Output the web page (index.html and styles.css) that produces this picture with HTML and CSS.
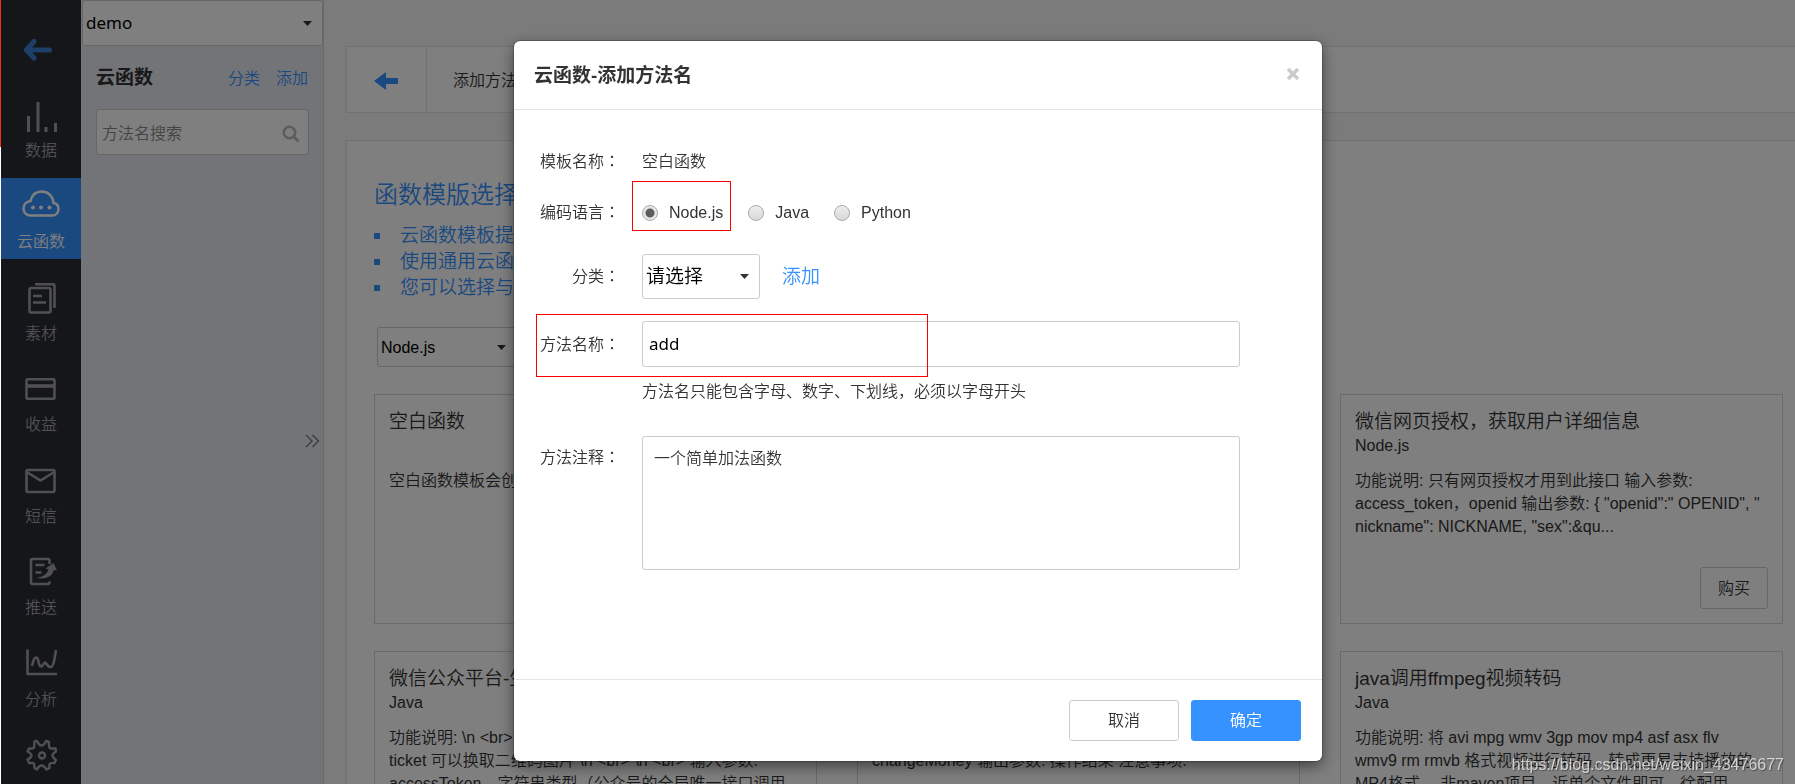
FILE: index.html
```html
<!DOCTYPE html>
<html lang="zh-CN">
<head>
<meta charset="utf-8">
<title>云函数</title>
<link rel="stylesheet" href="styles.css">
</head>
<body>
<div class="app">
  <nav class="nav">
    <a class="nav-back" href="#" aria-label="返回">
      <svg width="30" height="24" viewBox="0 0 30 24" fill="none" stroke="currentColor" stroke-width="5" stroke-linecap="round" stroke-linejoin="round"><path d="M11 3.500L3.500 12L11 20M4 12H26.500"/></svg>
    </a>
    <div class="nav-list">
      <a class="nav-item" href="#">
        <svg width="32" height="32" viewBox="0 0 32 32" fill="none" stroke="currentColor" stroke-width="3"><path d="M3.500 16v16M13 2v30M21 27v5M30.500 23v9"/></svg>
        <span>数据</span>
      </a>
      <a class="nav-item nav-item-active" href="#">
        <svg width="38" height="28" viewBox="0 0 38 28" fill="none" stroke="currentColor" stroke-width="2.500"><path d="M9 25.500C4.500 25.500 1.500 22.500 1.500 18.500C1.500 14.500 4.500 11.500 8.500 11C10 5 14 1.500 19.500 1.500C26 1.500 31 6 31.500 13C34.500 13.500 36.500 16 36.500 19C36.500 22.500 34 25.500 30 25.500Z"/><g fill="currentColor" stroke="none"><circle cx="11" cy="17.500" r="2"/><circle cx="19" cy="17.500" r="2"/><circle cx="27.500" cy="17.500" r="2"/></g></svg>
        <span>云函数</span>
      </a>
      <a class="nav-item" href="#">
        <svg width="32" height="32" viewBox="0 1 32 32" fill="none" stroke="currentColor" stroke-width="2.600"><rect x="4.500" y="6" width="21" height="24.500" rx="1.500"/><path d="M10 2.300H28.500Q29.500 2.300 29.500 3.500V26M8 14h9M8 20.500h13"/></svg>
        <span>素材</span>
      </a>
      <a class="nav-item" href="#">
        <svg width="32" height="32" viewBox="0 1 32 32" fill="none" stroke="currentColor" stroke-width="2.600"><rect x="1.500" y="6.300" width="28" height="19.500" rx="1.500"/><path d="M2 13h28" stroke-width="3.600"/></svg>
        <span>收益</span>
      </a>
      <a class="nav-item" href="#">
        <svg width="32" height="32" viewBox="0 1 32 32" fill="none" stroke="currentColor" stroke-width="2.600"><rect x="1.500" y="5" width="28" height="22" rx="1.500"/><path d="M2.500 7.500L15.500 15.500L28.500 7.500"/></svg>
        <span>短信</span>
      </a>
      <a class="nav-item" href="#">
        <svg width="32" height="32" viewBox="1 2 32 32" fill="none" stroke="currentColor" stroke-width="2.600"><path d="M25.500 9V5.500Q25.500 4 24 4H8.500Q7 4 7 5.500V27.500Q7 29 8.500 29H24Q25.500 29 25.500 26.500M11.500 10h9M11.500 17.500h6"/><path d="M12 23Q22 22 24.500 14.500L21.500 13.500L29.500 8L33 15.500L30 15Q27 25.500 12 23Z" fill="currentColor" stroke="none"/></svg>
        <span>推送</span>
      </a>
      <a class="nav-item" href="#">
        <svg width="32" height="32" viewBox="1 4 32 32" fill="none" stroke="currentColor" stroke-width="2.600"><path d="M3.500 4.500V29H33"/><path d="M8 21C9 17 10 12 12.500 12.500C15 13 14 21 17 21.500C19 21.500 19.500 17.500 21 17.500C22.500 17.500 23 22.500 27 22C30.500 21 31 10 32 5"/></svg>
        <span>分析</span>
      </a>
      <a class="nav-item nav-item-last" href="#" aria-label="设置">
        <svg width="32" height="32" viewBox="0 0 32 32" fill="none" stroke="currentColor" stroke-width="2.400" stroke-linejoin="round"><path d="M9.500 2.500L12 2Q14 6.500 16.500 6.500Q19 6.500 21 2L24 3Q23.500 8.500 25.500 9.500L30.500 9.500L31 12.500Q27.500 14.500 27.500 16.500Q27.500 18.500 31 21L29.500 24Q25.500 23.500 24.500 25V29L21.500 30.500Q19 26.500 16.500 26.500Q14 26.500 12 30.500L9.500 29Q9.500 25 8.500 24L4 24L2.500 20.500Q6.500 18.500 6.500 16.500Q6.500 14.500 2.500 12.500L4 9.500Q8 10 9 8.500Z"/><circle cx="17" cy="16.500" r="3"/></svg>
      </a>
    </div>
  </nav>

  <aside class="side">
    <select class="side-app" aria-label="应用"><option>demo</option></select>
    <div class="side-head">
      <h2>云函数</h2>
      <a href="#">分类</a>
      <a href="#">添加</a>
    </div>
    <div class="search">
      <input type="text" placeholder="方法名搜索" aria-label="方法名搜索">
      <svg width="18" height="18" viewBox="0 0 18 18" fill="none" stroke="currentColor" stroke-width="2.600"><circle cx="7.500" cy="7.500" r="5.700"/><path d="M11.500 11.500L16.500 16.500" stroke-width="3"/></svg>
    </div>
    <button class="side-toggle" type="button" aria-label="展开">
      <svg width="16" height="14" viewBox="0 0 16 14" fill="none" stroke="currentColor" stroke-width="1.300"><path d="M2 1L8 7L2 13M8.500 1L14.500 7L8.500 13"/></svg>
    </button>
  </aside>

  <main class="main">
    <header class="crumb">
      <a class="crumb-back" href="#" aria-label="返回">
        <svg width="24" height="18" viewBox="0 0 24 18" fill="currentColor"><path d="M0 9L12 0V6H24V12H12V18Z"/></svg>
      </a>
      <span class="crumb-title">添加方法</span>
    </header>
    <section class="panel">
      <h1>函数模版选择</h1>
      <ul class="tips">
        <li>云函数模板提供</li>
        <li>使用通用云函数</li>
        <li>您可以选择与</li>
      </ul>
      <select class="lang" aria-label="语言"><option>Node.js</option></select>
      <div class="cards">
        <article class="card">
          <h3>空白函数</h3>
          <p class="card-lang"></p>
          <p>空白函数模板会创建</p>
        </article>
        <article class="card"></article>
        <article class="card">
          <h3>微信网页授权，获取用户详细信息</h3>
          <p class="card-lang">Node.js</p>
          <p>功能说明: 只有网页授权才用到此接口 输入参数:<br>access_token，openid 输出参数: { "openid":" OPENID", "<br>nickname": NICKNAME, "sex":&amp;qu...</p>
          <button class="buy" type="button">购买</button>
        </article>
        <article class="card">
          <h3>微信公众平台-生成二维码</h3>
          <p class="card-lang">Java</p>
          <p>功能说明: \n &lt;br&gt;<br>ticket 可以换取二维码图片 \n &lt;br&gt; \n &lt;br&gt; 输入参数:<br>accessToken，字符串类型（公众号的全局唯一接口调用</p>
        </article>
        <article class="card">
          <h3></h3>
          <p class="card-lang">Java</p>
          <p>功能说明:<br>changeMoney 输出参数: 操作结果 注意事项:</p>
        </article>
        <article class="card">
          <h3>java调用ffmpeg视频转码</h3>
          <p class="card-lang">Java</p>
          <p>功能说明: 将 avi mpg wmv 3gp mov mp4 asf asx flv<br>wmv9 rm rmvb 格式视频进行转码，转成更易支持播放的<br>MP4格式， 非maven项目，近单个文件即可，徐配用</p>
        </article>
      </div>
    </section>
  </main>
</div>

<div class="overlay">
  <form class="modal" role="dialog" aria-labelledby="modal-title">
    <header class="modal-head">
      <h2 id="modal-title">云函数-添加方法名</h2>
      <button class="close" type="button" aria-label="关闭">
        <svg width="14" height="14" viewBox="0 0 14 14" fill="none" stroke="currentColor" stroke-width="3.600"><path d="M2 1L12 11M12 1L2 11"/></svg>
      </button>
    </header>
    <div class="modal-body">
      <div class="row row-text">
        <span class="label">模板名称<span lang="zh-TW" class="mid">：</span></span>
        <span>空白函数</span>
      </div>
      <div class="row row-radio">
        <span class="label">编码语言<span lang="zh-TW" class="mid">：</span></span>
        <div class="radios">
          <label class="marked"><input type="radio" name="lang" checked>Node.js</label>
          <label><input type="radio" name="lang">Java</label>
          <label><input type="radio" name="lang">Python</label>
        </div>
      </div>
      <div class="row row-kind">
        <label class="label" for="kind">分类<span lang="zh-TW" class="mid">：</span></label>
        <select class="kind" id="kind"><option>请选择</option></select>
        <a class="add" href="#">添加</a>
      </div>
      <div class="row row-name">
        <label class="label" for="name">方法名称<span lang="zh-TW" class="mid">：</span></label>
        <input class="name" id="name" type="text" value="add">
        <span class="frame"></span>
      </div>
      <p class="hint">方法名只能包含字母、数字、下划线，必须以字母开头</p>
      <div class="row row-note">
        <label class="label" for="note">方法注释<span lang="zh-TW" class="mid">：</span></label>
        <textarea class="note" id="note">一个简单加法函数</textarea>
      </div>
    </div>
    <footer class="modal-foot">
      <button class="btn" type="button">取消</button>
      <button class="btn btn-primary" type="submit">确定</button>
    </footer>
  </form>
</div>
<span class="edge"></span>
<span class="watermark">https://blog.csdn.net/weixin_43476677</span>
</body>
</html>
```
FILE: styles.css
```css
* { box-sizing: border-box; }

html, body { height: 100%; }

body {
  margin: 0;
  padding-left: 1px;
  overflow: hidden;
  background: #fff;
  color: #333;
  font: 350 16px/23px "Liberation Sans", "Noto Sans CJK SC", sans-serif;
}

h1, h2, h3, p, ul { margin: 0; padding: 0; }
a { color: #3592ff; text-decoration: none; }
button, input, select, textarea { font: inherit; color: inherit; }

select {
  appearance: none;
  border: 1px solid #ccc;
  border-radius: 3px;
  color: #000;
  background: #fff url("data:image/svg+xml,%3Csvg xmlns='http://www.w3.org/2000/svg' width='9' height='5'%3E%3Cpath d='M0 0h9L4.500 5z' fill='%23333'/%3E%3C/svg%3E") no-repeat right 10px center;
}

/* Full-width colon centred in its cell */
.mid { font-family: "Noto Sans CJK TC", sans-serif; line-height: 1; }

.app { display: flex; height: 100%; overflow: hidden; background: #f6f6f6; }

/* Left navigation */
.nav {
  display: flex;
  flex-direction: column;
  flex: 0 0 80px;
  background: #282c34;
}
.nav-back { display: flex; padding: 38px 0 0 22px; height: 87px; color: #3c80d0; }
.nav-list { display: flex; flex: 1; flex-direction: column; justify-content: space-between; }
.nav-item {
  display: flex;
  flex-direction: column;
  align-items: center;
  justify-content: flex-end;
  gap: 7px;
  height: 81px;
  padding-bottom: 6px;
  color: #a0a1a5;
}
.nav-item-active { gap: 12px; background: #3592ff; color: #fff; }
.nav-item-last { height: 57px; justify-content: flex-start; padding: 12px 0 0; }

/* Function list */
.side {
  position: relative;
  flex: 0 0 243px;
  padding-left: 1px;
  border-right: 1px solid #d5d5d8;
  background: #e7e9f0;
}
.side-app {
  display: block;
  width: 100%;
  height: 46px;
  padding: 0 3px 2px;
  font-family: "Noto Sans", "Noto Sans CJK SC", sans-serif;
  font-weight: 400;
  font-size: 17px;
}
.side-head { display: flex; align-items: center; gap: 16px; padding: 20px 15px 19px 14px; }
.side-head h2 { flex: 1; font-size: 19px; line-height: 24px; }
.search { position: relative; margin: 0 14px; }
.search input {
  width: 100%;
  height: 46px;
  padding: 3px 5px 0;
  border: 1px solid #ccc;
  border-radius: 3px;
  background: #fff;
}
.search input::placeholder { color: #888; opacity: 1; }
.search svg { position: absolute; right: 9px; top: 16px; color: #bbb; }
.side-toggle {
  position: absolute;
  right: 3px;
  top: 55%;
  padding: 0;
  border: 0;
  background: none;
  color: #777;
}

/* Page content */
.main { flex: 1; min-width: 0; padding: 46px 0 0 22px; }
.crumb {
  display: flex;
  height: 67px;
  border: 1px solid #e2e2e2;
  border-right: 0;
  background: #fff;
}
.crumb-back {
  display: flex;
  align-items: center;
  justify-content: center;
  width: 80px;
  padding: 3px 2px 0 0;
  border-right: 1px solid #e2e2e2;
}
.crumb-title { padding: 22px 26px; }
.panel {
  margin-top: 27px;
  padding: 36px 12px 0 27px;
  border: 1px solid #e2e2e2;
  border-right: 0;
  background: #fff;
}
.panel h1 { color: #3592ff; font-size: 24px; font-weight: 350; line-height: 36px; }
.tips { padding-top: 10px; color: #3592ff; font-size: 19px; line-height: 26px; list-style: none; }
.tips li { display: flex; align-items: center; gap: 20px; }
.tips li::before { content: ""; width: 6px; height: 6px; background: #3592ff; }
.lang { display: block; width: 140px; height: 40px; margin: 26px 0 27px 3px; padding: 0 3px; }
.cards { display: grid; grid-template-columns: repeat(3, 1fr); gap: 27px 40px; }
.card {
  display: flex;
  flex-direction: column;
  height: 230px;
  padding: 14px;
  border: 1px solid #d5d5d5;
  white-space: nowrap;
}
.card h3 { min-height: 25px; font-size: 19px; font-weight: 350; line-height: 25px; }
.card-lang { min-height: 23px; margin-bottom: 12px; }
.buy {
  align-self: flex-end;
  height: 42px;
  margin-top: auto;
  padding: 0 17px;
  border: 1px solid #ccc;
  border-radius: 3px;
  background: #fff;
}

/* Dialog */
.overlay {
  position: fixed;
  inset: 0 0 0 1px;
  padding: 41px 0 0 40px;
  background: rgba(0, 0, 0, 0.5);
}
.modal {
  width: 808px;
  margin: 0 auto;
  border-radius: 6px;
  background: #fff;
  box-shadow: 0 5px 15px rgba(0, 0, 0, 0.5), 0 0 0 1px rgba(0, 0, 0, 0.2);
}
.modal-head {
  display: flex;
  align-items: center;
  justify-content: space-between;
  height: 69px;
  padding: 0 22px 0 20px;
  border-bottom: 1px solid #e5e5e5;
}
.modal-head h2 { font-size: 19px; }
.close { display: flex; padding: 0; border: 0; background: none; color: #ccc; }
.modal-body { height: 569px; padding: 40px 82px 0 26px; }
.row { display: flex; align-items: center; }
.label { width: 80px; margin-right: 22px; text-align: right; white-space: nowrap; }
.row-radio { height: 49px; margin-top: 9px; padding-top: 12px; }
.radios { display: flex; gap: 25px; }
.radios label { position: relative; display: flex; align-items: center; gap: 11px; }
.radios input {
  appearance: none;
  width: 16px;
  height: 16px;
  margin: 0;
  border: 1px solid #aaa;
  border-radius: 50%;
  background: linear-gradient(#eee, #d8d8d8);
}
.radios input:checked { background: radial-gradient(circle, #5c5c5c 4px, #e6e6e6 5px); }
.marked::after {
  content: "";
  position: absolute;
  inset: -20px -8px -7px -10px;
  border: 1px solid #f00;
  pointer-events: none;
}
.row-kind { margin-top: 23px; }
.kind { width: 118px; height: 45px; padding: 0 3px; font-size: 19px; }
.add { margin-left: 22px; font-size: 19px; }
.row-name { position: relative; margin-top: 22px; }
.name {
  flex: 1;
  height: 46px;
  padding: 0 6px 2px;
  border: 1px solid #ccc;
  border-radius: 3px;
  color: #000;
  font-family: "Noto Sans", "Noto Sans CJK SC", sans-serif;
  font-weight: 400;
  font-size: 17px;
}
.frame {
  position: absolute;
  top: -7px;
  left: -4px;
  width: 392px;
  height: 63px;
  border: 1px solid #f00;
  pointer-events: none;
}
.hint { margin: 13px 0 0 102px; }
.row-note { align-items: flex-start; margin-top: 33px; }
.row-note .label { padding-top: 10px; }
.note {
  flex: 1;
  height: 134px;
  padding: 10px 11px;
  border: 1px solid #ccc;
  border-radius: 3px;
  resize: none;
}
.modal-foot {
  display: flex;
  justify-content: flex-end;
  gap: 12px;
  padding: 20px 21px;
  border-top: 1px solid #e5e5e5;
}
.btn {
  width: 110px;
  height: 41px;
  border: 1px solid #ccc;
  border-radius: 3px;
  background: #fff;
}
.btn-primary { border-color: #3592ff; background: #3592ff; color: #fff; }

.edge {
  position: fixed;
  top: 0;
  left: 0;
  width: 1px;
  height: 147px;
  background: #e8301c;
}
.watermark {
  position: fixed;
  right: 11px;
  bottom: 8px;
  color: rgba(255, 255, 255, 0.7);
  text-shadow: 1px 1px 1px rgba(0, 0, 0, 0.4);
}
```
